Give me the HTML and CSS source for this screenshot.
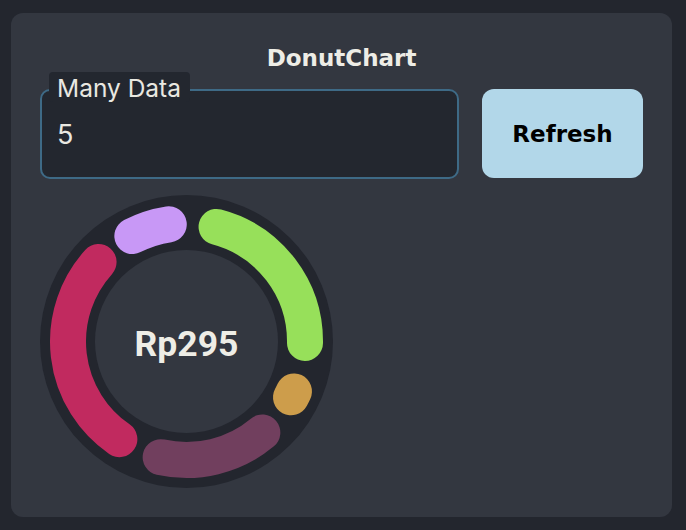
FILE: index.html
```html
<!DOCTYPE html>
<html lang="en">
<head>
<meta charset="utf-8">
<title>DonutChart</title>
<link rel="stylesheet" href="styles.css">
</head>
<body>
<div class="card">
  <h1 class="title">DonutChart</h1>
  <div class="controls">
    <div class="field">
      <span class="field-label">Many Data</span>
      <span class="field-value">5</span>
    </div>
    <button class="btn" type="button">Refresh</button>
  </div>
  <div class="donut">
    <svg class="donut-svg" width="293" height="293" viewBox="0 0 293 293">
      <circle cx="146.5" cy="146.5" r="146.5" fill="#23262e"/>
      <circle cx="146.5" cy="146.5" r="91.5" fill="#333740"/>
      <g fill="none" stroke-width="36" stroke-linecap="round">
        <path d="M176.57 31.88 A118.5 118.5 0 0 1 264.99 147.95" stroke="#97e05a"/>
        <path d="M253.95 196.40 A118.5 118.5 0 0 1 251.00 202.30" stroke="#cd9d4b"/>
        <path d="M222.35 237.54 A118.5 118.5 0 0 1 120.65 262.15" stroke="#713f5e"/>
        <path d="M79.38 244.16 A118.5 118.5 0 0 1 58.57 67.06" stroke="#c12a5f"/>
        <path d="M92.33 41.11 A118.5 118.5 0 0 1 128.78 29.33" stroke="#c898f6"/>
      </g>
    </svg>
    <div class="donut-total">Rp295</div>
  </div>
</div>
</body>
</html>
```
FILE: styles.css
```css
* { box-sizing: border-box; }
html, body { margin: 0; height: 100%; }
body {
  background: #23262e;
  padding: 13px 14px 13px 11px;
}
.card {
  background: #333740;
  border-radius: 12px;
  padding: 31px 29px 29px;
  height: 504px;
}
.title {
  margin: 0;
  font-family: "DejaVu Sans", sans-serif;
  font-weight: bold;
  font-size: 23px;
  line-height: 28px;
  color: #eeede6;
  text-align: center;
}
.controls {
  display: flex;
  align-items: flex-start;
  gap: 23px;
  margin-top: 17px;
}
.field {
  position: relative;
  flex: 1;
  height: 90px;
  border: 2px solid #3e6a86;
  border-radius: 10px;
  background: #23272f;
  padding: 28px 15px 0;
}
.field-label {
  position: absolute;
  top: -19px;
  left: 7px;
  padding: 2px 9px 0 8px;
  background: #23272f;
  border-radius: 4px;
  font-family: Inter, sans-serif;
  font-size: 24.5px;
  line-height: 28px;
  color: #e9e8e1;
}
.field-value {
  display: block;
  font-family: Inter, sans-serif;
  font-size: 27px;
  line-height: 32px;
  color: #e9e8e1;
}
.btn {
  width: 161px;
  height: 89px;
  border: none;
  border-radius: 12px;
  background: #b2d7e9;
  font-family: "DejaVu Sans", sans-serif;
  font-weight: bold;
  font-size: 23px;
  line-height: 28px;
  color: #000;
  padding: 0;
}
.donut {
  display: grid;
  width: 293px;
  height: 293px;
  margin-top: 16px;
  place-items: center;
}
.donut > * { grid-area: 1 / 1; }
.donut-svg { display: block; }
.donut-total {
  margin-top: 4px;
  font-family: Roboto, sans-serif;
  font-weight: bold;
  font-size: 35.5px;
  line-height: 36px;
  color: #eeede6;
}
```
